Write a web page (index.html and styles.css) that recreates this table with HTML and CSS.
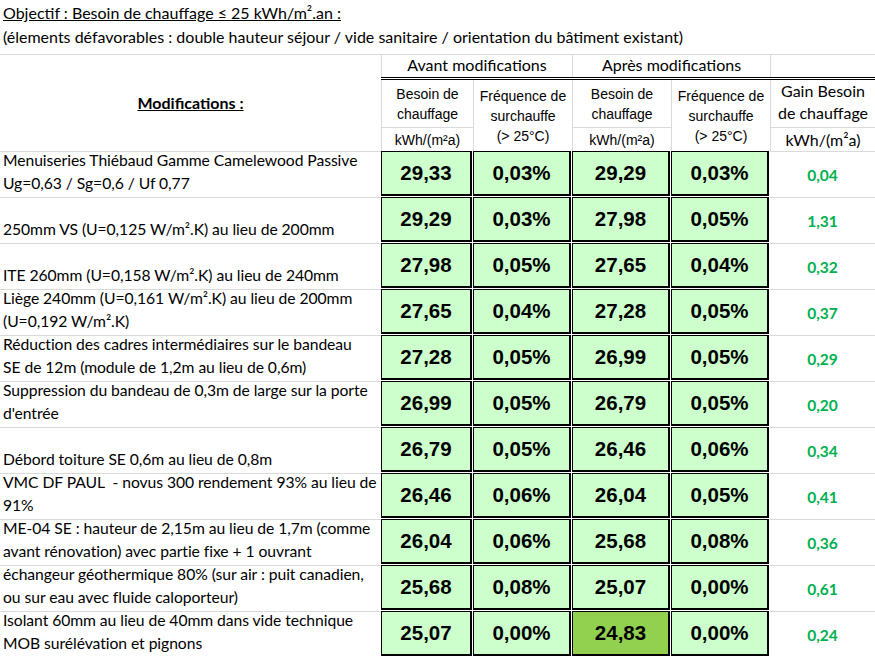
FILE: index.html
```html
<!DOCTYPE html>
<html lang="fr">
<head>
<meta charset="utf-8">
<title>Besoin de chauffage</title>
<link rel="stylesheet" href="styles.css">
</head>
<body>
<div class="title">
  <div class="t1">Objectif : Besoin de chauffage ≤ 25 kWh/m².an :</div>
  <div class="t2">(élements défavorables : double hauteur séjour / vide sanitaire / orientation du bâtiment existant)</div>
</div>

<div class="head">
  <div class="mods-h"><span>Modifications :</span></div>
  <div class="grp g-av">Avant modifications</div>
  <div class="grp g-ap">Après modifications</div>
  <div class="grp g-gain"></div>
  <div class="dbl"></div>
  <div class="hc arial sub c2">Besoin de<br>chauffage</div>
  <div class="hc arial freq c3">Fréquence de<br>surchauffe<br>(&gt; 25°C)</div>
  <div class="hc arial sub c4">Besoin de<br>chauffage</div>
  <div class="hc arial freq c5">Fréquence de<br>surchauffe<br>(&gt; 25°C)</div>
  <div class="hc sub c6 gain-h">Gain Besoin<br>de chauffage</div>
  <div class="hc arial unit c2">kWh/(m²a)</div>
  <div class="hc arial unit c4">kWh/(m²a)</div>
  <div class="hc unit unit-c c6">kWh/(m²a)</div>
</div>

<div class="body">
  <div class="desc"><span>Menuiseries Thiébaud Gamme Camelewood Passive</span><span>Ug=0,63 / Sg=0,6 / Uf 0,77</span></div>
  <div class="box">29,33</div><div class="box">0,03%</div><div class="box">29,29</div><div class="box">0,03%</div>
  <div class="gain">0,04</div>

  <div class="desc"><span>250mm VS (U=0,125 W/m².K) au lieu de 200mm</span></div>
  <div class="box">29,29</div><div class="box">0,03%</div><div class="box">27,98</div><div class="box">0,05%</div>
  <div class="gain">1,31</div>

  <div class="desc"><span>ITE 260mm (U=0,158 W/m².K) au lieu de 240mm</span></div>
  <div class="box">27,98</div><div class="box">0,05%</div><div class="box">27,65</div><div class="box">0,04%</div>
  <div class="gain">0,32</div>

  <div class="desc"><span>Liège 240mm (U=0,161 W/m².K) au lieu de 200mm</span><span>(U=0,192 W/m².K)</span></div>
  <div class="box">27,65</div><div class="box">0,04%</div><div class="box">27,28</div><div class="box">0,05%</div>
  <div class="gain">0,37</div>

  <div class="desc"><span>Réduction des cadres intermédiaires sur le bandeau</span><span>SE de 12m (module de 1,2m au lieu de 0,6m)</span></div>
  <div class="box">27,28</div><div class="box">0,05%</div><div class="box">26,99</div><div class="box">0,05%</div>
  <div class="gain">0,29</div>

  <div class="desc"><span>Suppression du bandeau de 0,3m de large sur la porte</span><span>d'entrée</span></div>
  <div class="box">26,99</div><div class="box">0,05%</div><div class="box">26,79</div><div class="box">0,05%</div>
  <div class="gain">0,20</div>

  <div class="desc"><span>Débord toiture SE 0,6m au lieu de 0,8m</span></div>
  <div class="box">26,79</div><div class="box">0,05%</div><div class="box">26,46</div><div class="box">0,06%</div>
  <div class="gain">0,34</div>

  <div class="desc"><span>VMC DF PAUL&nbsp; - novus 300 rendement 93% au lieu de</span><span>91%</span></div>
  <div class="box">26,46</div><div class="box">0,06%</div><div class="box">26,04</div><div class="box">0,05%</div>
  <div class="gain">0,41</div>

  <div class="desc"><span>ME-04 SE : hauteur de 2,15m au lieu de 1,7m (comme</span><span>avant rénovation) avec partie fixe + 1 ouvrant</span></div>
  <div class="box">26,04</div><div class="box">0,06%</div><div class="box">25,68</div><div class="box">0,08%</div>
  <div class="gain">0,36</div>

  <div class="desc"><span>échangeur géothermique 80% (sur air : puit canadien,</span><span>ou sur eau avec fluide caloporteur)</span></div>
  <div class="box">25,68</div><div class="box">0,08%</div><div class="box">25,07</div><div class="box">0,00%</div>
  <div class="gain">0,61</div>

  <div class="desc"><span>Isolant 60mm au lieu de 40mm dans vide technique</span><span>MOB surélévation et pignons</span></div>
  <div class="box">25,07</div><div class="box">0,00%</div><div class="box hl">24,83</div><div class="box">0,00%</div>
  <div class="gain">0,24</div>
</div>
</body>
</html>
```

FILE: styles.css
```css
* {
  box-sizing: border-box;
  margin: 0;
  padding: 0;
}

body {
  margin: 0;
  width: 875px;
  height: 656px;
  overflow: hidden;
  background: #ffffff;
  color: #000000;
  font-family: "Lato", "DejaVu Sans", sans-serif;
  font-size: 16px;
}

.title {
  height: 54px;
  padding: 1px 0 0 3px;
  line-height: 24px;
  white-space: nowrap;
}

.t1 {
  text-decoration: underline;
}

.head,
.body {
  display: grid;
  grid-template-columns: 381px 92px 99px 99px 99px 105px;
}

.head {
  grid-template-rows: 23px 3px 47px 24px;
}

.mods-h {
  grid-row: 1 / 5;
  grid-column: 1;
  border-top: 1px solid #dadada;
  display: flex;
  align-items: center;
  justify-content: center;
  font-weight: 700;
  text-decoration: underline;
  padding-bottom: 2px;
}

.grp {
  grid-row: 1;
  border-top: 1px solid #dadada;
  border-left: 1px solid #dadada;
  text-align: center;
  line-height: 20px;
}

.g-av { grid-column: 2 / 4; }
.g-ap { grid-column: 4 / 6; }
.g-gain { grid-column: 6; }

.dbl {
  grid-row: 2;
  grid-column: 2 / 7;
  border-top: 1px solid #000000;
  border-bottom: 1px solid #000000;
}

.hc {
  border-left: 1px solid #dadada;
  display: flex;
  align-items: center;
  justify-content: center;
  text-align: center;
}

.arial {
  font-family: "Liberation Sans", Arial, sans-serif;
  font-size: 14px;
  line-height: 20px;
}

.c2 { grid-column: 2; }
.c3 { grid-column: 3; }
.c4 { grid-column: 4; }
.c5 { grid-column: 5; }
.c6 { grid-column: 6; }

.sub { grid-row: 3; }
.freq { grid-row: 3 / 5; }

.unit {
  grid-row: 4;
  border-top: 1px solid #dadada;
  line-height: 22px;
}

.gain-h {
  align-items: flex-start;
  line-height: 21.5px;
}

.unit-c {
  line-height: 21px;
}

.body {
  grid-auto-rows: 46px;
}

.desc {
  border-top: 1px solid #dadada;
  padding: 0 0 3px 3px;
  display: flex;
  flex-direction: column;
  justify-content: flex-end;
  font-size: 15.7px;
  letter-spacing: -0.06px;
  line-height: 22.5px;
  white-space: nowrap;
  overflow: hidden;
}

.box {
  background: #ccffcc;
  border-style: solid;
  border-color: #000000;
  border-width: 1px 2px 2px 1px;
  margin: 0 1px 1px 0;
  display: flex;
  align-items: center;
  justify-content: center;
  font-family: "Liberation Sans", Arial, sans-serif;
  font-weight: 700;
  font-size: 20.5px;
}

.box.hl {
  background: #92d050;
}

.gain {
  border-top: 1px solid #dadada;
  display: flex;
  align-items: center;
  justify-content: center;
  color: #00b050;
  font-weight: 700;
  font-size: 15.5px;
  padding-top: 1px;
}
```
